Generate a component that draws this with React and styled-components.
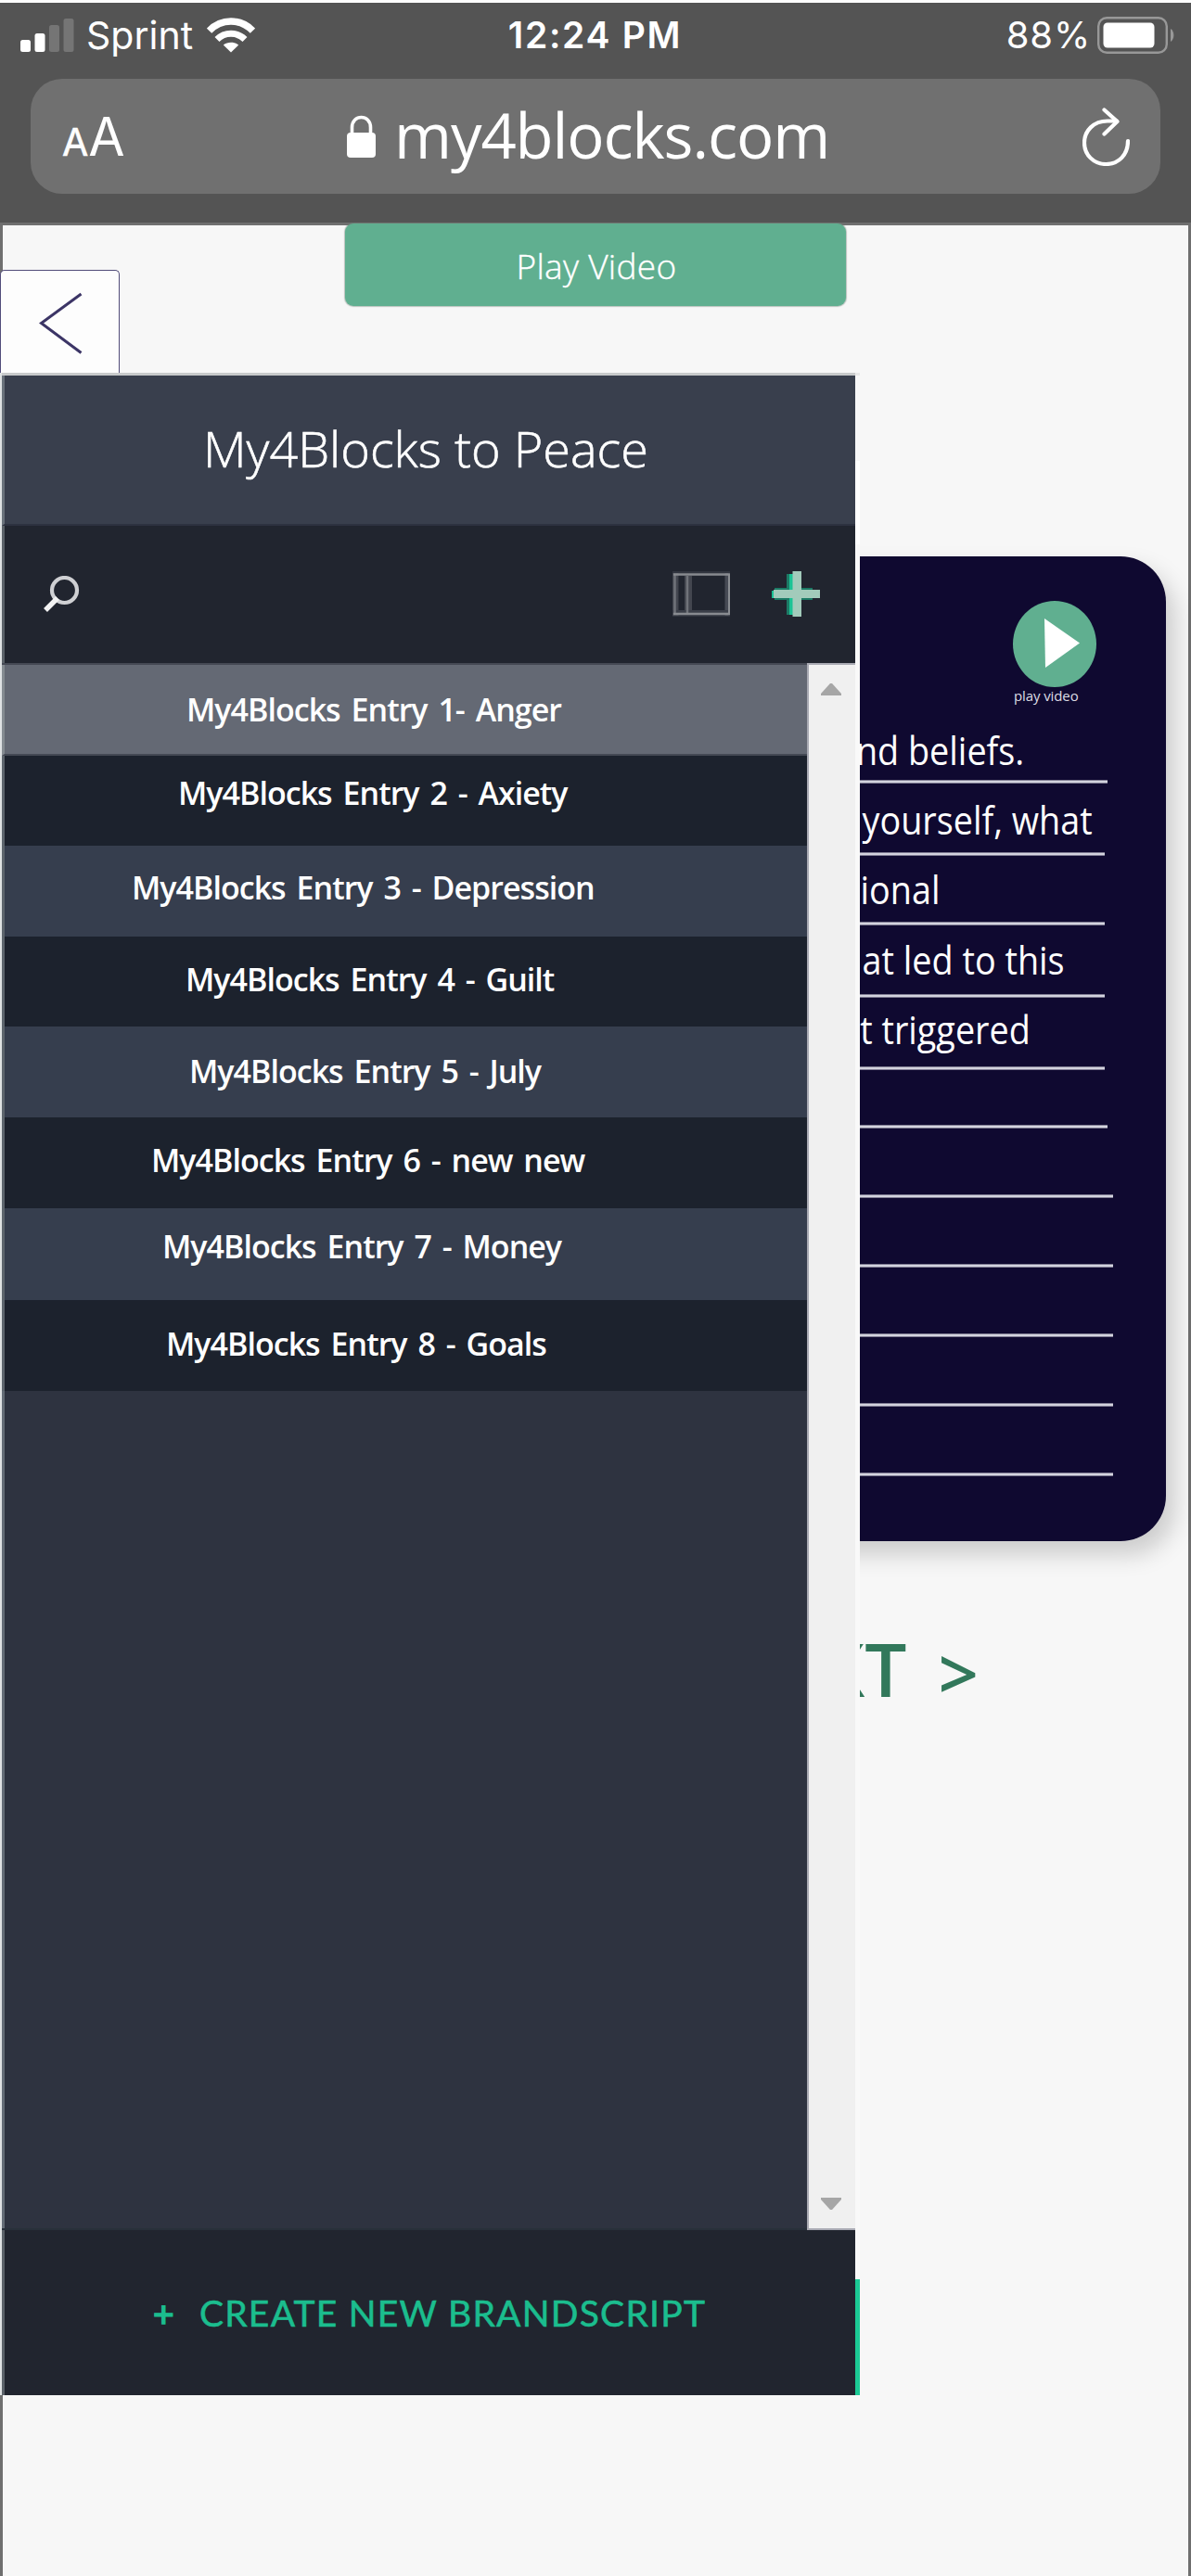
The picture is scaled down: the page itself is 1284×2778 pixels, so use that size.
import React from "react";
import styled, { createGlobalStyle } from "styled-components";

const GlobalStyle = createGlobalStyle`
  * { box-sizing: border-box; }
  body { margin: 0; background: #f7f7f7; font-family: "Open Sans", "Noto Sans", sans-serif; }
  svg { display: block; flex: none; }
`;

const Page = styled.div`
  display: flex;
  flex-direction: column;
  width: 1284px;
  height: 2778px;
  overflow: hidden;
  background: #f7f7f7;
`;

/* ---------- browser chrome ---------- */

const Chrome = styled.header`
  flex: none;
  height: 243px;
  background: #545454;
  border-top: 3px solid #fdfdfd;
  border-bottom: 3px solid #6f6f6f;
  color: #fff;
  font-family: Inter, "Open Sans", sans-serif;
`;

const StatusBar = styled.div`
  display: grid;
  grid-template-columns: 1fr auto 1fr;
  align-items: center;
  height: 70px;
  padding: 0 18px 0 22px;
`;

const StatusGroup = styled.div`
  display: flex;
  align-items: center;
  justify-content: ${(p) => (p.$end ? "flex-end" : "flex-start")};
`;

const Carrier = styled.span`
  margin: 0 15px 0 13px;
  font-size: 41px;
  line-height: 50px;
`;

const Clock = styled.span`
  margin-right: 5px;
  font-size: 39px;
  font-weight: 600;
  letter-spacing: 1.7px;
  line-height: 50px;
`;

const Charge = styled.span`
  margin-right: 7px;
  font-size: 40px;
  letter-spacing: 0.8px;
  line-height: 50px;
`;

const AddressBar = styled.div`
  display: grid;
  grid-template-columns: 307px 1fr auto;
  align-items: center;
  height: 124px;
  margin: 12px 33px 0;
  padding: 0 33px 0 34px;
  border-radius: 34px;
  background: #707070;
`;

const TextSize = styled.div`
  display: flex;
  align-items: baseline;
  gap: 1px;
  line-height: 60px;
  padding-top: 6px;
`;

const Letter = styled.span`
  font-size: ${(p) => (p.$large ? 57 : 41)}px;
  letter-spacing: -1px;
  -webkit-text-stroke: ${(p) => (p.$large ? 0 : 0.6)}px #fff;
`;

const Site = styled.div`
  display: flex;
  align-items: center;
  gap: 20px;
`;

const Domain = styled.span`
  margin-top: -4px;
  font-family: "Open Sans", sans-serif;
  font-size: 67px;
  letter-spacing: -1.1px;
  line-height: 90px;
`;

/* ---------- page behind the drawer ---------- */

const Stage = styled.main`
  position: relative;
  flex: 1;
  display: flex;
  flex-direction: column;
  border: solid #6f6f6f;
  border-width: 0 3px;
`;

const VideoButton = styled.button`
  position: relative;
  align-self: center;
  flex: none;
  width: 540px;
  height: 89px;
  margin-top: -2px;
  padding: 2px 0 0 2px;
  border: 0;
  border-radius: 9px;
  background: #60af90;
  box-shadow: 0 0 1px 1px rgba(110, 130, 120, 0.45);
  color: #fff;
  font: 300 37px/50px "Open Sans", sans-serif;
  letter-spacing: 0.3px;
  -webkit-text-stroke: 0.4px #fff;
`;

const Card = styled.section`
  flex: none;
  height: 1062px;
  margin: 270px 24px 0;
  border-radius: 49px;
  background: #0f0930;
  box-shadow: 9px 14px 26px rgba(0, 0, 0, 0.18);
  color: #fff;
`;

const CardTop = styled.div`
  display: flex;
  justify-content: flex-end;
  height: 165px;
  padding: 48px 75px 0 0;
`;

const PlayLink = styled.div`
  width: 90px;
`;

const PlayLabel = styled.div`
  margin-top: -1px;
  padding-left: 1px;
  color: #dddce4;
  font-size: 15px;
  letter-spacing: -0.1px;
  line-height: 20px;
  white-space: nowrap;
`;

const Line = styled.div`
  display: flex;
  flex-direction: column;
  justify-content: space-between;
  height: ${(p) => p.$height}px;
  padding: ${(p) => p.$top}px 0 0;
`;

const LineText = styled.span`
  align-self: flex-end;
  margin-right: ${(p) => p.$inset}px;
  font-size: 41.5px;
  line-height: 40px;
  white-space: nowrap;
  transform: scaleX(0.91);
  transform-origin: right center;
`;

const Rule = styled.hr`
  align-self: stretch;
  height: 4px;
  margin: auto ${(p) => p.$inset}px 0 60px;
  border: solid #817e94;
  border-width: 1px 0;
  background: #d3d3de;
`;

const Next = styled.div`
  display: flex;
  justify-content: flex-end;
  gap: 34px;
  margin: 87px 226px 0 0;
  color: #32785b;
  font-size: 80px;
  font-weight: 600;
  line-height: 100px;
`;

const NextArrow = styled.span`
  padding-top: 5px;
  font-size: 76px;
`;

/* ---------- drawer ---------- */

const Drawer = styled.aside`
  position: absolute;
  left: -3px;
  top: 48px;
  width: 927px;
`;

const BackTab = styled.button`
  display: flex;
  align-items: flex-start;
  width: 129px;
  height: 111px;
  padding: 23px 0 0 41px;
  border: 1px solid #524d7a;
  border-bottom: 0;
  border-radius: 5px 5px 0 0;
  background: #fdfdfd;
`;

const Panel = styled.div`
  display: flex;
  height: 2181px;
  border-left: 2px solid #dfe2e3;
`;

const PanelBody = styled.div`
  display: flex;
  flex-direction: column;
  width: 920px;
  border-top: 3px solid #c8cacb;
`;

const Title = styled.h1`
  height: 162px;
  margin: 0;
  padding: 38px 0 0 214px;
  border-left: 3px solid #6a727b;
  border-bottom: 2px solid #2d3240;
  background: #393f4d;
  color: #fff;
  font-size: 54px;
  font-weight: 300;
  letter-spacing: 0;
  line-height: 80px;
  white-space: nowrap;
  -webkit-text-stroke: 0.6px #fff;
`;

const Toolbar = styled.div`
  display: flex;
  align-items: center;
  gap: 44px;
  height: 148px;
  padding: 0 38px 0 42px;
  border-left: 3px solid #5b6269;
  background: #21252f;
`;

const Spacer = styled.div`
  flex: 1;
`;

const Scroller = styled.div`
  display: flex;
  height: 1690px;
`;

const List = styled.ul`
  flex: 1;
  margin: 0;
  padding: 2px 0 0;
  list-style: none;
  border: solid #28303a;
  border-width: 0 0 2px;
  background: linear-gradient(#454954 2px, #2e3340 2px);
`;

const Entry = styled.li`
  height: ${(p) => p.$height}px;
  padding: ${(p) => p.$top}px 0 0 ${(p) => p.$indent}px;
  border-left: 3px solid ${(p) => (p.$active ? "#858b91" : "#5d656d")};
  border-bottom: ${(p) => (p.$active ? "2px solid #444954" : "0")};
  background: ${(p) => (p.$active ? "#646974" : p.$dark ? "#1c222d" : "#363e4e")};
  color: #fff;
  font-size: 34px;
  font-weight: 600;
  letter-spacing: -0.98px;
  word-spacing: 4px;
  line-height: 44px;
  white-space: nowrap;
`;

const EmptyArea = styled.li`
  height: 903px;
  border-left: 3px solid #646c76;
`;

const Scrollbar = styled.div`
  display: flex;
  flex-direction: column;
  justify-content: space-between;
  width: 52px;
  padding: 20px 0 20px 13px;
  border: solid #a9aab3;
  border-width: 2px 0 2px 2px;
  background: #f0f0f0;
`;

const Create = styled.button`
  display: flex;
  align-items: center;
  gap: 26px;
  height: 178px;
  padding: 0 0 0 160px;
  border: 0;
  border-left: 3px solid #5b6269;
  background: #21252f;
  color: #1bbd8e;
  font: 400 39px/50px Lato, sans-serif;
  letter-spacing: 1.25px;
  white-space: nowrap;
  -webkit-text-stroke: 0.6px #1bbd8e;
`;

const CreatePlus = styled.span`
  -webkit-text-stroke: 1.6px #1bbd8e;
`;

const Edge = styled.div`
  display: flex;
  flex-direction: column;
  width: 5px;
  background: #f9f9f9;
`;

const EdgeStrip = styled.div`
  height: ${(p) => p.$height}px;
  margin-top: ${(p) => p.$gap || 0}px;
  background: ${(p) => p.$color};
`;

/* ---------- icons ---------- */

const SignalIcon = () => (
  <svg width="58" height="36" viewBox="0 0 58 36">
    <rect x="0" y="23" width="11" height="13" rx="2.5" fill="#fff" />
    <rect x="15.5" y="16" width="11" height="20" rx="2.5" fill="#fff" />
    <rect x="31" y="7" width="11" height="29" rx="2.5" fill="#757575" />
    <rect x="46.5" y="0" width="11" height="36" rx="2.5" fill="#757575" />
  </svg>
);

const WifiIcon = () => (
  <svg width="52" height="38" viewBox="0 0 52 38">
    <g fill="none" stroke="#fff">
      <path d="M2.5 14.2 C15.5 0.6 36.5 0.6 49.5 14.2" strokeWidth="7.500" />
      <path d="M11 23.500 C19.3 15.200 32.7 15.200 41 23.500" strokeWidth="7" />
    </g>
    <path d="M26 37.5 L17.8 29.6 C22.2 25.8 29.8 25.8 34.2 29.6 Z" fill="#fff" />
  </svg>
);

const BatteryIcon = () => (
  <svg width="83" height="40" viewBox="0 0 83 40">
    <rect x="1.2" y="1.2" width="73.6" height="37.6" rx="9" fill="none" stroke="#989898" strokeWidth="2.4" />
    <rect x="6.5" y="6.5" width="55" height="27" rx="4.5" fill="#fff" />
    <path d="M79 13 C83.5 15.500 83.500 24.500 79 27 Z" fill="#989898" />
  </svg>
);

const LockIcon = () => (
  <svg width="31" height="46" viewBox="0 0 31 46">
    <path d="M5.500 22 V13.500 C5.500 -1.200 25.500 -1.200 25.500 13.500 V22" fill="none" stroke="#fff" strokeWidth="3.600" />
    <rect x="0" y="19" width="31" height="27" rx="4" fill="#fff" />
  </svg>
);

const ReloadIcon = () => (
  <svg width="51" height="63" viewBox="0 0 51 63">
    <g fill="none" stroke="#fff" strokeWidth="4.200" strokeLinecap="round" strokeLinejoin="round">
      <path d="M37 14.500 H27 C12 14.500 2 25 2 38 C2 51 12 61 25.500 61 C39 61 49 51 49 36" />
      <path d="M23.500 2.500 L37.500 15 L23.500 28.500" />
    </g>
  </svg>
);

const BackIcon = () => (
  <svg width="48" height="68" viewBox="0 0 48 68">
    <path d="M45.500 2 L2.500 33.500 L45.500 65.500" fill="none" stroke="#3c3566" strokeWidth="3" />
  </svg>
);

const SearchIcon = () => (
  <svg width="39" height="40" viewBox="0 0 39 40">
    <ellipse cx="22.500" cy="15.500" rx="13.500" ry="13.500" fill="none" stroke="#cfd0d3" strokeWidth="4.200" />
    <path d="M15 24 L2 37" stroke="#f3f3f3" strokeWidth="5.500" />
  </svg>
);

const SidebarIcon = () => (
  <svg width="62" height="50" viewBox="0 0 62 50">
    <path d="M0 1 H62 M0 48 H62" stroke="#31353f" strokeWidth="2" />
    <path d="M2.500 2 V48 M17 5 V45" stroke="#43464f" strokeWidth="8" />
    <path d="M58.500 2 V48" stroke="#464a54" strokeWidth="4" />
    <path d="M0 43.500 H62" stroke="#3b3f49" strokeWidth="3" />
    <path d="M2.500 3.500 V47 M16 5 V45" stroke="#70737a" strokeWidth="2.500" />
    <path d="M1 3.500 H62 M1 46 H62" stroke="#888b90" strokeWidth="2.500" />
    <path d="M61 3 V47" stroke="#8a8d92" strokeWidth="2" />
  </svg>
);

const PlusIcon = () => (
  <svg width="53" height="50" viewBox="0 0 53 50">
    <path d="M4 18 H45 V31 H4 Z M17 3 H27 V47 H17 Z" fill="#1c7a65" />
    <path d="M20 3 H28 V47 H20 Z M1 21 H8 V29 H1 Z" fill="#1bc395" />
    <path d="M23.500 0 H33 V20 H53 V29 H33 V49 H23.500 V29 H3 V20 H23.500 Z" fill="#a2cbbb" />
  </svg>
);

const PlayIcon = () => (
  <svg width="90" height="93" viewBox="0 0 90 93">
    <ellipse cx="45" cy="46.500" rx="45" ry="46.500" fill="#60af90" />
    <path d="M34 19 L72 45.500 L35 72 Z" fill="#fff" />
  </svg>
);

const ArrowIcon = ({ down }) => (
  <svg width="22" height="13" viewBox="0 0 22 13">
    <path d={down ? "M0 0 H22 V2 L12 13 H10 L0 2 Z" : "M0 13 H22 V11 L12 0 H10 L0 11 Z"} fill="#a6a6a6" />
  </svg>
);

/* ---------- data ---------- */

const lines = [
  { text: "nd beliefs.", height: 80, top: 24, end: 1101, rule: 1194 },
  { text: "yourself, what", height: 78, top: 19, end: 1175, rule: 1191 },
  { text: "ional", height: 75, top: 16, end: 1010, rule: 1191 },
  { text: "at led to this", height: 78, top: 17, end: 1145, rule: 1191 },
  { text: "t triggered", height: 78, top: 14, end: 1108, rule: 1191 },
  { height: 63, rule: 1194 },
  { height: 75, rule: 1200 },
  { height: 75, rule: 1200 },
  { height: 75, rule: 1200 },
  { height: 75, rule: 1200 },
  { height: 75, rule: 1200 },
];

const entries = [
  { text: "My4Blocks Entry 1- Anger", height: 98, top: 26, indent: 196 },
  { text: "My4Blocks Entry 2 - Axiety", height: 97, top: 18, indent: 187 },
  { text: "My4Blocks Entry 3 - Depression", height: 98, top: 23, indent: 137 },
  { text: "My4Blocks Entry 4 - Guilt", height: 97, top: 24, indent: 195 },
  { text: "My4Blocks Entry 5 - July", height: 98, top: 26, indent: 199 },
  { text: "My4Blocks Entry 6 - new new", height: 98, top: 24, indent: 158 },
  { text: "My4Blocks Entry 7 - Money", height: 99, top: 19, indent: 170 },
  { text: "My4Blocks Entry 8 - Goals", height: 98, top: 25, indent: 174 },
];

export default function App() {
  return (
    <Page>
      <GlobalStyle />
      <Chrome>
        <StatusBar>
          <StatusGroup>
            <SignalIcon />
            <Carrier>Sprint</Carrier>
            <WifiIcon />
          </StatusGroup>
          <Clock>12:24 PM</Clock>
          <StatusGroup $end>
            <Charge>88%</Charge>
            <BatteryIcon />
          </StatusGroup>
        </StatusBar>
        <AddressBar>
          <TextSize>
            <Letter>A</Letter>
            <Letter $large>A</Letter>
          </TextSize>
          <Site>
            <LockIcon />
            <Domain>my4blocks.com</Domain>
          </Site>
          <ReloadIcon />
        </AddressBar>
      </Chrome>

      <Stage>
        <VideoButton>Play Video</VideoButton>
        <Card>
          <CardTop>
            <PlayLink>
              <PlayIcon />
              <PlayLabel>play video</PlayLabel>
            </PlayLink>
          </CardTop>
          {lines.map((line, i) => (
            <Line key={i} $height={line.height} $top={line.top || 0}>
              {line.text && <LineText $inset={1257 - line.end - 3}>{line.text}</LineText>}
              <Rule $inset={1257 - line.rule} />
            </Line>
          ))}
        </Card>
        <Next>
          <span>XT</span>
          <NextArrow>&gt;</NextArrow>
        </Next>

        <Drawer>
          <BackTab aria-label="Back">
            <BackIcon />
          </BackTab>
          <Panel>
            <PanelBody>
              <Title>My4Blocks to Peace</Title>
              <Toolbar>
                <SearchIcon />
                <Spacer />
                <SidebarIcon />
                <PlusIcon />
              </Toolbar>
              <Scroller>
                <List>
                  {entries.map((entry, i) => (
                    <Entry
                      key={entry.text}
                      $active={i === 0}
                      $dark={i % 2 === 1}
                      $height={entry.height}
                      $top={entry.top}
                      $indent={entry.indent}
                    >
                      {entry.text}
                    </Entry>
                  ))}
                  <EmptyArea />
                </List>
                <Scrollbar>
                  <ArrowIcon />
                  <ArrowIcon down />
                </Scrollbar>
              </Scroller>
              <Create>
                <CreatePlus>+</CreatePlus>
                <span>CREATE NEW BRANDSCRIPT</span>
              </Create>
            </PanelBody>
            <Edge>
              <EdgeStrip $height={3} $color="#e8e8e8" />
              <EdgeStrip $height={92} $color="#f7f7f7" />
              <EdgeStrip $height={90} $color="#ffffff" />
              <EdgeStrip $height={125} $gap={1871} $color="#1bca95" />
            </Edge>
          </Panel>
        </Drawer>
      </Stage>
    </Page>
  );
}
